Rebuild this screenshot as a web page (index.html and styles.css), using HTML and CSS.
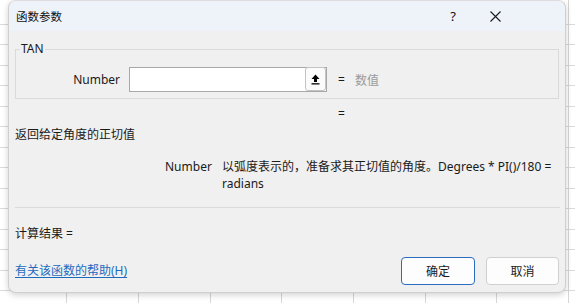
FILE: index.html
```html
<!DOCTYPE html>
<html lang="zh-CN">
<head>
<meta charset="utf-8">
<link rel="stylesheet" href="styles.css">
</head>
<body>
<div class="dialog">
  <div class="titlebar">
    <span class="title">函数参数</span>
    <span class="help">?</span>
    <span class="close"><svg width="11" height="11" viewBox="0 0 11 11"><path d="M0.5 0.5 L10.5 10.5 M10.5 0.5 L0.5 10.5" stroke="#1a1a1a" stroke-width="1.1" fill="none"/></svg></span>
  </div>
  <div class="content">
    <fieldset class="group">
      <legend>TAN</legend>
      <div class="arg-row">
        <label class="arg-label">Number</label>
        <div class="input">
          <span class="ref-btn"><svg width="9" height="11" viewBox="0 0 9 11"><path d="M4.5 0.5 L8.5 5 L6 5 L6 8 L3 8 L3 5 L0.5 5 Z" fill="#000"/><rect x="0.5" y="9.2" width="8" height="1.3" fill="#000"/></svg></span>
        </div>
        <span class="eq">=</span>
        <span class="val">数值</span>
      </div>
    </fieldset>
    <div class="eq-row"><span class="eq">=</span></div>
    <div class="summary">返回给定角度的正切值</div>
    <div class="desc-row">
      <span class="desc-name">Number</span>
      <span class="desc-text">以弧度表示的，准备求其正切值的角度。Degrees * PI()/180 = radians</span>
    </div>
    <div class="sep"></div>
    <div class="result">计算结果 =</div>
    <div class="footer">
      <a class="help-link" href="#">有关该函数的帮助(H)</a>
      <div class="buttons">
        <button class="btn btn-default">确定</button>
        <button class="btn">取消</button>
      </div>
    </div>
  </div>
</div>
</body>
</html>
```

FILE: styles.css
```css
html, body {
  margin: 0;
  padding: 0;
}
body {
  width: 575px;
  height: 303px;
  overflow: hidden;
  font-family: "Noto Sans", "Noto Sans CJK SC", sans-serif;
  font-size: 12px;
  color: #1a1a1a;
  background-color: #ffffff;
  background-image:
    repeating-linear-gradient(to right, transparent 0, transparent 66px, #d6d6d6 66px, #d6d6d6 67px, transparent 67px, transparent 71.75px),
    repeating-linear-gradient(to bottom, transparent 0, transparent 19.5px, #dadada 19.5px, #dadada 20.5px);
  background-position: 0 0, 0 4px;
}
.dialog {
  margin-left: 8px;
  width: 556px;
  height: 291px;
  border: 1px solid #cfcfcf;
  border-top-color: #dcdcdc;
  border-radius: 8px;
  background: #f0f0f0;
  box-shadow: 0 2px 6px rgba(0,0,0,0.18);
  overflow: hidden;
  display: flex;
  flex-direction: column;
}
.titlebar {
  height: 30px;
  background: #eef2f9;
  display: flex;
  align-items: center;
  padding-left: 7px;
  flex: none;
}
.title {
  font-family: "Noto Sans CJK SC", sans-serif;
  font-size: 11.5px;
  color: #111;
}
.help {
  margin-left: auto;
  font-size: 13px;
  color: #111;
  margin-right: 34px;
}
.close {
  display: flex;
  margin-right: 64px;
  width: 11px;
  height: 11px;
}
.content {
  padding: 0 6px;
  display: flex;
  flex-direction: column;
  flex: 1;
}
.group {
  margin: 10px 0 0 0;
  padding: 0 0 6px 0;
  border: 1px solid #dadada;
  min-width: 0;
}
.group legend {
  margin-left: 4px;
  padding: 0 1px;
  line-height: 16px;
  font-size: 12px;
}
.arg-row {
  display: flex;
  align-items: center;
  margin-top: 10px;
  height: 25px;
}
.arg-label {
  width: 104px;
  text-align: right;
  margin-right: 9px;
}
.input {
  width: 196px;
  height: 23px;
  border: 1px solid #a8a8a8;
  background: #fff;
  display: flex;
  justify-content: flex-end;
}
.ref-btn {
  width: 19px;
  height: 22px;
  border: 1px solid #c4c4c4;
  border-radius: 3px;
  background: #fbfbfb;
  display: flex;
  align-items: center;
  justify-content: center;
  margin-top: -1px;
  margin-right: 0;
}
.eq {
  margin-left: 11px;
  color: #1a1a1a;
}
.val {
  margin-left: 10px;
  color: #9a9a9a;
  font-family: "Noto Sans CJK SC", sans-serif;
}
.eq-row {
  margin-top: 7px;
  height: 16px;
  line-height: 16px;
  padding-left: 312px;
}
.summary {
  margin-top: 5px;
  line-height: 16px;
}
.desc-row {
  display: flex;
  margin-top: 15px;
  line-height: 17px;
}
.desc-name {
  margin-left: 150px;
  width: 57px;
  flex: none;
}
.desc-text {
  width: 338px;
}
.sep {
  margin-top: 15px;
  height: 1px;
  background: #dadada;
  margin-right: -1px;
}
.result {
  margin-top: 18px;
  line-height: 16px;
}
.footer {
  display: flex;
  align-items: center;
  margin-top: 15px;
}
.help-link {
  color: #1c6bbf;
  text-decoration: underline;
  text-underline-offset: 2px;
  line-height: 16px;
}
.buttons {
  margin-left: auto;
  display: flex;
  gap: 11px;
  margin-right: 0;
}
.btn {
  font-family: "Noto Sans", "Noto Sans CJK SC", sans-serif;
  font-size: 12px;
  color: #1a1a1a;
  width: 73px;
  height: 28px;
  background: #fdfdfd;
  border: 1px solid #d0d0d0;
  border-radius: 4px;
  padding: 0;
}
.btn-default {
  width: 74px;
  border-color: #2a6cc0;
}
```
